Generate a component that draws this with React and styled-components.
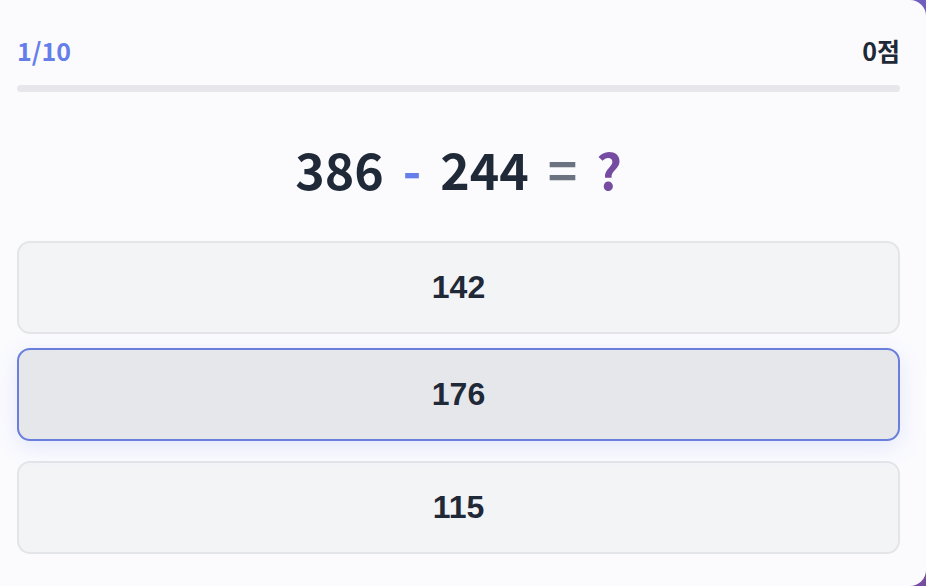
import React from "react";
import styled, { createGlobalStyle } from "styled-components";

const Global = createGlobalStyle`
  html, body {
    margin: 0;
    padding: 0;
    height: 100%;
    overflow: hidden;
  }
  body {
    background: linear-gradient(135deg, #667eea 0%, #764ba2 100%);
    font-family: "Noto Sans CJK KR", "Noto Sans", sans-serif;
  }
`;

const Card = styled.div`
  box-sizing: border-box;
  width: calc(100% + 24px);
  margin-left: -24px;
  height: 586px;
  background: #fbfbfe;
  border-radius: 16px;
  padding: 28px 26px 0 41px;
  display: flex;
  flex-direction: column;
`;

const Header = styled.div`
  display: flex;
  justify-content: space-between;
  align-items: center;
  font-weight: 700;
  font-size: 25px;
  line-height: 44px;
`;

const Counter = styled.span`
  color: #667eea;
`;

const Score = styled.span`
  color: #1f2937;
`;

const Track = styled.div`
  margin-top: 13px;
  height: 7px;
  border-radius: 4px;
  background: #e7e7eb;
  overflow: hidden;
`;

const Fill = styled.div`
  height: 100%;
  background: linear-gradient(90deg, #667eea, #764ba2);
`;

const Equation = styled.div`
  display: flex;
  justify-content: center;
  align-items: center;
  gap: 19px;
  margin: 34px 0 31px;
  font-size: 50px;
  font-weight: 700;
  line-height: 84px;
`;

const Term = styled.span`
  color: ${(p) => p.$color};
`;

const Options = styled.div`
  display: flex;
  flex-direction: column;
  gap: 17px;
`;

const Option = styled.button`
  box-sizing: border-box;
  width: 100%;
  height: 93px;
  border-radius: 13px;
  border: 2px solid ${(p) => (p.$active ? "#6a7fdc" : "#e4e5e9")};
  background: ${(p) => (p.$active ? "#e6e7eb" : "#f3f4f6")};
  box-shadow: ${(p) =>
    p.$active ? "0 6px 22px rgba(102, 126, 234, 0.16)" : "none"};
  transform: ${(p) => (p.$active ? "translateY(-3px)" : "none")};
  font-family: "Liberation Sans", Arial, sans-serif;
  font-weight: 700;
  font-size: 32px;
  color: #1f2937;
  display: flex;
  align-items: center;
  justify-content: center;
  cursor: pointer;
`;

export default function App() {
  const options = [142, 176, 115];
  return (
    <>
      <Global />
      <Card>
        <Header>
          <Counter>1/10</Counter>
          <Score>0점</Score>
        </Header>
        <Track>
          <Fill style={{ width: "0%" }} />
        </Track>
        <Equation>
          <Term $color="#1f2937">386</Term>
          <Term $color="#667eea">-</Term>
          <Term $color="#1f2937">244</Term>
          <Term $color="#6b7280">=</Term>
          <Term $color="#764ba2">?</Term>
        </Equation>
        <Options>
          {options.map((o, i) => (
            <Option key={o} $active={i === 1}>
              {o}
            </Option>
          ))}
        </Options>
      </Card>
    </>
  );
}
